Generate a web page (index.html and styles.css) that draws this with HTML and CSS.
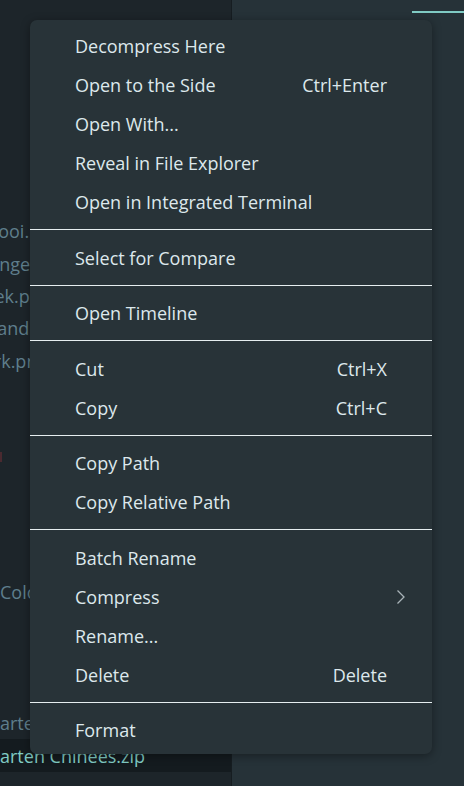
FILE: index.html
```html
<!DOCTYPE html>
<html>
<head>
<meta charset="utf-8">
<link rel="stylesheet" href="styles.css">
</head>
<body>
<div class="app">
  <aside class="sidebar">
    <div class="rows-a">
      <div class="row"><span class="name shift">Mooi.png</span></div>
      <div class="row"><span class="name shift2">Tekeningen</span></div>
      <div class="row"><span class="name shift3">Boek.png</span></div>
      <div class="row"><span class="name shift4">Zandbak.png</span></div>
      <div class="row"><span class="name shift5">Park.png</span></div>
    </div>
    <div class="row err-row"><span class="err"></span></div>
    <div class="row folder"><span class="name">Colorful</span></div>
    <div class="row"><span class="name">arten</span></div>
    <div class="row selected"><span class="name sel">arten Chinees.zip</span></div>
  </aside>
  <main class="main">
    <div class="tab-line"></div>
  </main>

  <div class="menu">
    <div class="item"><span class="label">Decompress Here</span></div>
    <div class="item"><span class="label">Open to the Side</span><span class="key">Ctrl+Enter</span></div>
    <div class="item"><span class="label">Open With...</span></div>
    <div class="item"><span class="label">Reveal in File Explorer</span></div>
    <div class="item"><span class="label">Open in Integrated Terminal</span></div>
    <div class="sep"></div>
    <div class="item"><span class="label">Select for Compare</span></div>
    <div class="sep"></div>
    <div class="item"><span class="label">Open Timeline</span></div>
    <div class="sep"></div>
    <div class="item"><span class="label">Cut</span><span class="key">Ctrl+X</span></div>
    <div class="item"><span class="label">Copy</span><span class="key">Ctrl+C</span></div>
    <div class="sep"></div>
    <div class="item"><span class="label">Copy Path</span></div>
    <div class="item"><span class="label">Copy Relative Path</span></div>
    <div class="sep"></div>
    <div class="item"><span class="label">Batch Rename</span></div>
    <div class="item"><span class="label">Compress</span>
      <svg class="chev" width="10" height="16" viewBox="0 0 10 16"><path d="M1.5 1.5 L8 8 L1.5 14.5" fill="none" stroke="#a9b3b8" stroke-width="1.3"/></svg>
    </div>
    <div class="item"><span class="label">Rename...</span></div>
    <div class="item"><span class="label">Delete</span><span class="key">Delete</span></div>
    <div class="sep"></div>
    <div class="item"><span class="label">Format</span></div>
  </div>
</div>
</body>
</html>
```
FILE: styles.css
```css
* { box-sizing: border-box; }
html, body { margin: 0; padding: 0; }
body {
  width: 464px;
  height: 786px;
  overflow: hidden;
  background: #263238;
  font-family: "Open Sans", "Noto Sans", sans-serif;
}
.app {
  position: relative;
  display: flex;
  width: 464px;
  height: 786px;
}
.sidebar {
  width: 232px;
  flex: none;
  background: #1d252a;
  border-right: 1px solid #161d21;
  padding-top: 215px;
  display: flex;
  flex-direction: column;
  overflow: hidden;
}
.rows-a { display: flex; flex-direction: column; }
.row {
  height: 32.4px;
  flex: none;
  display: flex;
  align-items: center;
  white-space: nowrap;
  font-size: 18px;
  color: #5f7e8c;
}
.name { display: block; }
.shift { margin-left: -18px; }
.shift2 { margin-left: -56px; }
.shift3 { margin-left: -28px; }
.shift4 { margin-left: -13px; }
.shift5 { margin-left: -27px; }
.err-row { margin-top: 64px; }
.err {
  width: 2px;
  height: 10px;
  background: #4a2a30;
}
.folder { margin-top: 102px; }
.folder + .row { margin-top: 99px; }
.selected {
  background: #141b1f;
  height: 33px;
}
.sel { color: #80cbc4; }
.main {
  flex: 1;
  position: relative;
  background: #263238;
}
.tab-line {
  margin-top: 11px;
  margin-left: auto;
  width: 52px;
  height: 2px;
  background: #80cbc4;
}
.menu {
  position: absolute;
  left: 30px;
  top: 20px;
  width: 402px;
  height: 734px;
  background: #283338;
  border-radius: 7px;
  box-shadow: 0 2px 10px rgba(0, 0, 0, 0.38);
  padding: 6.5px 0 4.5px;
  display: flex;
  flex-direction: column;
  color: #dde8ec;
}
.item {
  height: 39px;
  flex: none;
  display: flex;
  align-items: center;
  padding: 0 45px;
  font-size: 18px;
  position: relative;
}
.label { flex: 1; }
.key { color: #dde8ec; }
.chev {
  position: absolute;
  right: 26px;
  top: 11.5px;
}
.sep {
  flex: none;
  height: 1px;
  margin: 7.75px 0;
  background: #e6eef0;
}
```
